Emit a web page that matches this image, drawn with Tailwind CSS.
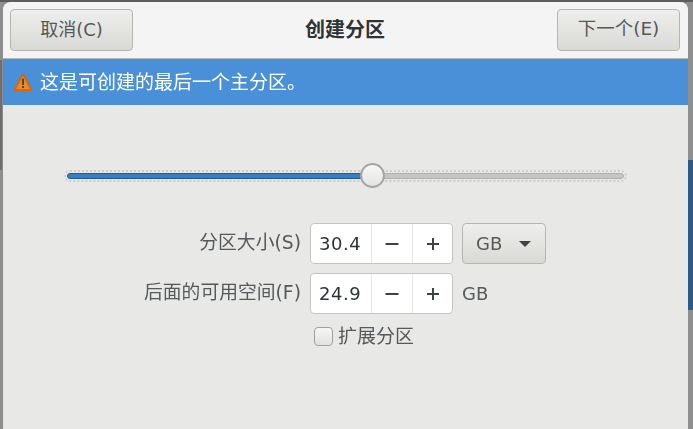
<!DOCTYPE html>
<html lang="zh-CN"><head><meta charset="utf-8">
<script src="https://cdn.jsdelivr.net/npm/@tailwindcss/browser@4"></script>
</head>
<body class="m-0 overflow-hidden">
<div class="relative w-[693px] h-[429px] overflow-hidden bg-[#8f8f8f] font-['DejaVu_Sans','Noto_Sans_CJK_SC',sans-serif] text-[#55595b]">
  <div class="absolute left-[688px] top-[160px] w-[5px] h-[150px] bg-[#2c5a85]"></div>
  <div class="absolute left-0 top-0 w-[693px] h-[2px] bg-[#5d5d5d]"></div>
  <div class="absolute left-0 top-[60px] w-[2px] h-[110px] bg-[#6e6e6e]"></div>
  <div class="relative ml-[3px] mt-[2px] w-[685px] h-[427px] rounded-t-[8px] bg-[#e8e8e7] overflow-hidden flex flex-col blur-[0.35px]">
    <header class="h-[57px] shrink-0 bg-[#f4f4f4] border-b border-[#b8b8b6] flex items-center justify-between pl-[7px] pr-[8px] pb-[1px]">
      <button class="w-[123px] h-[42px] rounded-[4px] border border-[#b5b5b3] bg-gradient-to-b from-[#eeeeec] to-[#d9d9d6] text-[18px] leading-none flex items-center justify-center">取消(C)</button>
      <h1 class="text-[20px] font-bold text-[#2e3436] leading-none">创建分区</h1>
      <button class="w-[123px] h-[42px] rounded-[4px] border border-[#b5b5b3] bg-gradient-to-b from-[#eeeeec] to-[#d9d9d6] text-[18.5px] leading-none flex items-center justify-center">下一个(E)</button>
    </header>
    <div class="h-[46px] shrink-0 bg-[#4a90d9] flex items-center pl-[10px] gap-[7px] text-white text-[19px] leading-none">
      <svg width="20" height="20" viewBox="0 0 20 20" class="shrink-0"><path d="M10 2 18.5 18H1.5Z" fill="#f08a24" stroke="#d2690f" stroke-width="2" stroke-linejoin="round"/><rect x="9" y="6.5" width="2" height="6.5" fill="#5a4530"/><rect x="9" y="14" width="2" height="2" fill="#5a4530"/></svg>
      <span>这是可创建的最后一个主分区。</span>
    </div>
    <main class="flex-1 flex flex-col">
      <div class="relative mt-[58px] ml-[61px] w-[563px] h-[25px] flex items-center">
        <div class="w-full h-[12px] rounded-full border-2 border-dotted border-[#cdcdcb] p-[1px] flex">
          <div class="w-[300px] h-full rounded-l-full bg-[#3a7cc4] border border-[#1f5a99]"></div>
          <div class="flex-1 h-full rounded-r-full bg-[#c6c6c4] border border-[#aeaeac]"></div>
        </div>
        <div class="absolute left-[296px] top-0 w-[25px] h-[25px] rounded-full border-2 border-[#a5a5a3] bg-gradient-to-b from-[#f7f7f7] to-[#e4e4e2]"></div>
      </div>
      <div class="mt-[35px] grid grid-cols-[298px_143px_auto] gap-x-[9px] gap-y-[9px] items-center">
        <label class="justify-self-end text-[18.8px] leading-none">分区大小(S)</label>
        <div class="h-[41px] flex rounded-[4px] border border-[#c4c4c2] bg-white text-[#2e3436]">
          <span class="w-[60px] pl-[8px] flex items-center text-[18px] tracking-[0.5px]">30.4</span>
          <span class="w-[41px] border-l border-[#e6e6e4] flex items-center justify-center"><svg width="14" height="14" viewBox="0 0 14 14"><rect x="0.5" y="6" width="13" height="2" fill="#3e4345"/></svg></span>
          <span class="flex-1 border-l border-[#e6e6e4] flex items-center justify-center"><svg width="14" height="14" viewBox="0 0 14 14"><path d="M1 6h5V1h2v5h5v2H8v5H6V8H1Z" fill="#3e4345"/></svg></span>
        </div>
        <button class="w-[84px] h-[41px] rounded-[4px] border border-[#b5b5b3] bg-gradient-to-b from-[#eeeeec] to-[#d9d9d6] flex items-center justify-between pl-[13px] pr-[14px] text-[18px] leading-none">GB<svg width="12" height="6" viewBox="0 0 12 6"><path d="M0 0h12L6 6Z" fill="#3e4345"/></svg></button>
        <label class="justify-self-end text-[18.8px] leading-none">后面的可用空间(F)</label>
        <div class="h-[41px] flex rounded-[4px] border border-[#c4c4c2] bg-white text-[#2e3436]">
          <span class="w-[60px] pl-[8px] flex items-center text-[18px] tracking-[0.5px]">24.9</span>
          <span class="w-[41px] border-l border-[#e6e6e4] flex items-center justify-center"><svg width="14" height="14" viewBox="0 0 14 14"><rect x="0.5" y="6" width="13" height="2" fill="#3e4345"/></svg></span>
          <span class="flex-1 border-l border-[#e6e6e4] flex items-center justify-center"><svg width="14" height="14" viewBox="0 0 14 14"><path d="M1 6h5V1h2v5h5v2H8v5H6V8H1Z" fill="#3e4345"/></svg></span>
        </div>
        <span class="text-[18px] leading-none">GB</span>
      </div>
      <div class="mt-[13px] ml-[311px] flex items-center gap-[5px] text-[19px] leading-none">
        <span class="w-[19px] h-[19px] rounded-[4px] border border-[#a0a09e] bg-gradient-to-b from-[#f6f6f6] to-[#e2e2e0]"></span>
        <span>扩展分区</span>
      </div>
    </main>
  </div>
</div>
</body></html>
